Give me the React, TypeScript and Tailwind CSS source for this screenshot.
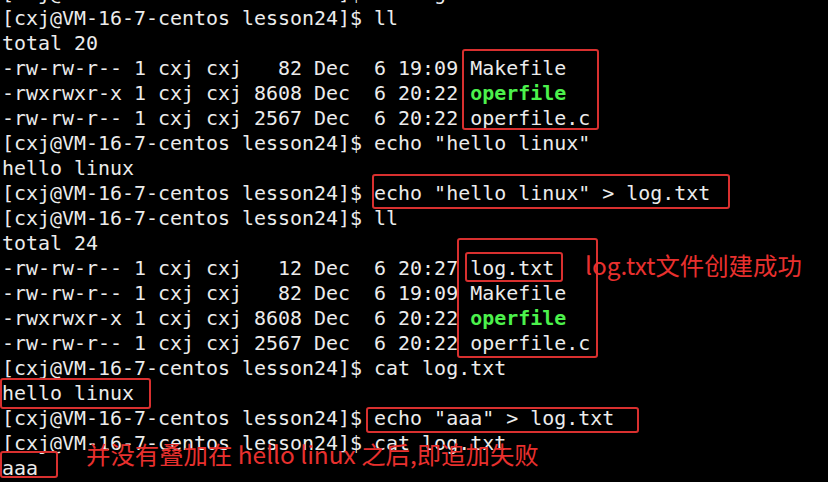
import React from 'react'

const P = '[cxj@VM-16-7-centos lesson24]$ '

// each line: text, plus an optional green (executable) file name at the end
type Line = { t: string; exe?: string }

const lines: Line[] = [
  { t: P + 'rm log.txt' },
  { t: P + 'll' },
  { t: 'total 20' },
  { t: '-rw-rw-r-- 1 cxj cxj   82 Dec  6 19:09 Makefile' },
  { t: '-rwxrwxr-x 1 cxj cxj 8608 Dec  6 20:22 ', exe: 'operfile' },
  { t: '-rw-rw-r-- 1 cxj cxj 2567 Dec  6 20:22 operfile.c' },
  { t: P + 'echo "hello linux"' },
  { t: 'hello linux' },
  { t: P + 'echo "hello linux" > log.txt' },
  { t: P + 'll' },
  { t: 'total 24' },
  { t: '-rw-rw-r-- 1 cxj cxj   12 Dec  6 20:27 log.txt' },
  { t: '-rw-rw-r-- 1 cxj cxj   82 Dec  6 19:09 Makefile' },
  { t: '-rwxrwxr-x 1 cxj cxj 8608 Dec  6 20:22 ', exe: 'operfile' },
  { t: '-rw-rw-r-- 1 cxj cxj 2567 Dec  6 20:22 operfile.c' },
  { t: P + 'cat log.txt' },
  { t: 'hello linux' },
  { t: P + 'echo "aaa" > log.txt' },
  { t: P + 'cat log.txt' },
  { t: 'aaa' },
]

const box = 'absolute border-2 border-[#d9302f] rounded-[3px]'
const note = 'absolute text-[#e8302e] text-[24.4px] leading-none whitespace-nowrap'

export default function App() {
  return (
    <div className="relative w-[828px] h-[482px] overflow-hidden bg-black">
      {/* terminal output, first line scrolled half out of view */}
      <div
        className="-mt-[19px] pl-[2px] text-[19.95px] leading-[25px] text-[#ececec] whitespace-pre"
        style={{ fontFamily: '"DejaVu Sans Mono", "Liberation Mono", monospace' }}
      >
        {lines.map((l, i) => (
          <div key={i}>
            {l.t}
            {l.exe && <span className="font-bold text-[#4cf24c]">{l.exe}</span>}
          </div>
        ))}
      </div>

      {/* red annotations drawn over the screenshot */}
      <div className={`${box} left-[462px] top-[49px] w-[137px] h-[81px]`} />
      <div className={`${box} left-[372px] top-[174px] w-[358px] h-[35px]`} />
      <div className={`${box} left-[457px] top-[238px] w-[141px] h-[120px]`} />
      <div className={`${box} left-[465px] top-[252px] w-[98px] h-[30px]`} />
      <div className={`${box} left-0 top-[378px] w-[151px] h-[31px]`} />
      <div className={`${box} left-[366px] top-[407px] w-[273px] h-[26px]`} />
      <div className={`${box} left-0 top-[451px] w-[58px] h-[27px]`} />

      <div
        className={`${note} left-[585px] top-[253px]`}
        style={{ fontFamily: '"Noto Sans CJK SC", "Noto Sans", sans-serif' }}
      >
        log.txt文件创建成功
      </div>
      <div
        className={`${note} left-[86px] top-[442px]`}
        style={{ fontFamily: '"Noto Sans CJK SC", "Noto Sans", sans-serif' }}
      >
        并没有叠加在 hello linux 之后,即追加失败
      </div>
    </div>
  )
}
